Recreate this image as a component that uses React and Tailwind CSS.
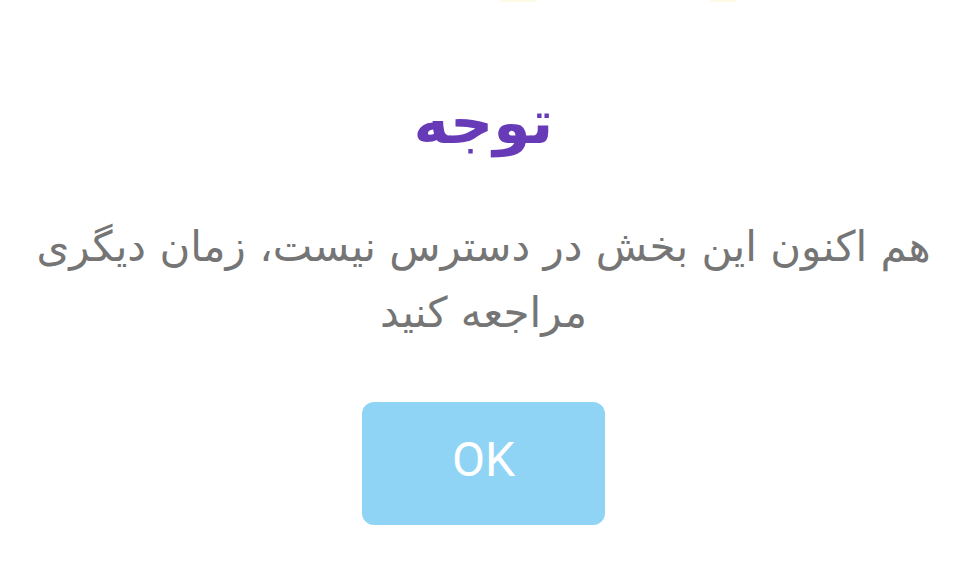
export default function App() {
  return (
    <div className="w-[975px] h-[568px] bg-white overflow-hidden relative flex flex-col items-center pr-[8px]" dir="rtl">
      <div className="absolute top-0 left-[500px] w-[36px] h-[2px] bg-[#fdfbe6]" />
      <div className="absolute top-0 left-[710px] w-[26px] h-[2px] bg-[#fdfbe6]" />
      <h1 className="mt-[82px] text-[60px] leading-[80px] font-bold text-[#673ab7]" style={{ fontFamily: '"DejaVu Sans", sans-serif' }}>
        توجه
      </h1>
      <p className="mt-[52px] text-center text-[42px] leading-[66px] text-[#757575] whitespace-nowrap" style={{ fontFamily: '"DejaVu Sans", sans-serif' }}>
        هم اکنون این بخش در دسترس نیست، زمان دیگری
        <br />
        مراجعه کنید
      </p>
      <button className="mt-[56px] w-[243px] h-[123px] rounded-[12px] bg-[#8fd4f5] text-white text-[48px] flex items-center justify-center pb-[8px]" style={{ fontFamily: 'Roboto, sans-serif' }}>
        OK
      </button>
    </div>
  );
}
